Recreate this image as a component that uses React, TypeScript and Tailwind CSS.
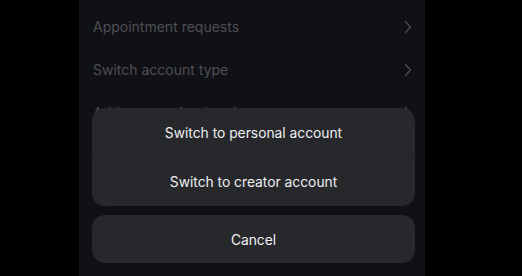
import React from "react";

const Chevron = () => (
  <svg width="8" height="14" viewBox="0 0 8 14" fill="none">
    <path d="M1.5 1.5 L6.5 7 L1.5 12.5" stroke="#4b4c52" strokeWidth="1.3" strokeLinecap="round" strokeLinejoin="round" />
  </svg>
);

const rows = ["Appointment requests", "Switch account type", "Add new professional account"];

export default function App() {
  return (
    <div className="w-[522px] h-[276px] bg-black overflow-hidden pl-[79px]" style={{ fontFamily: "Inter, 'Noto Sans', sans-serif" }}>
      <div className="relative w-[346px] h-full bg-[#101115]">
        <div className="flex flex-col pt-[5px]">
          {rows.map((r) => (
            <div key={r} className="h-[43px] flex items-center justify-between pl-[14px] pr-[13px]">
              <span className="text-[14px] text-[#4d4e54]">{r}</span>
              <Chevron />
            </div>
          ))}
        </div>
        <div className="absolute left-[13px] right-[10px] top-[108px] flex flex-col gap-[9px]">
          <div className="rounded-[13px] bg-[#27282c] overflow-hidden flex flex-col">
            <div className="h-[49px] pt-[3px] flex items-center justify-center text-[13.8px] text-[#f0f0f2] border-b border-[#24252a]">
              Switch to personal account
            </div>
            <div className="h-[49px] pt-[2px] flex items-center justify-center text-[13.8px] text-[#f0f0f2]">
              Switch to creator account
            </div>
          </div>
          <div className="h-[48px] pt-[2px] rounded-[13px] bg-[#27282c] flex items-center justify-center text-[13.8px] text-[#f0f0f2]">
            Cancel
          </div>
        </div>
      </div>
    </div>
  );
}
